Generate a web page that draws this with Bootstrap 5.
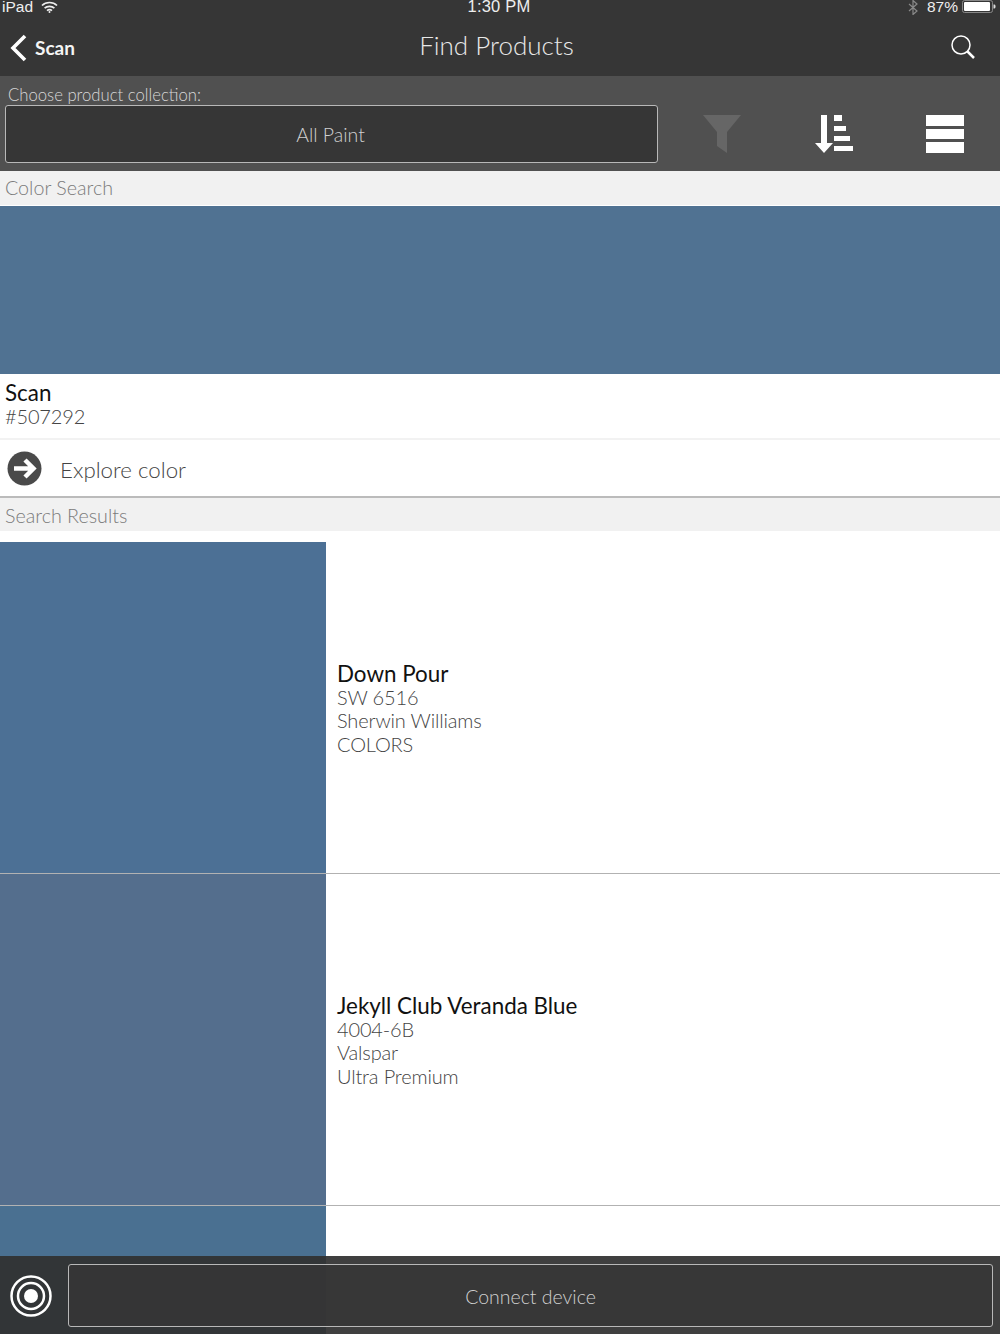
<!DOCTYPE html>
<html lang="en"><head><meta charset="utf-8"><title>Find Products</title>
<link href="https://cdn.jsdelivr.net/npm/bootstrap@5.3.0/dist/css/bootstrap.min.css" rel="stylesheet">
<style>
html,body{margin:0;background:#fff}
.app-screen{position:relative;width:1000px;height:1334px;overflow:hidden;font-family:Lato,sans-serif;font-weight:300;color:#3c3c3c}
.top-dark{height:76px;background:#363636;color:#fff}
.status-row{height:14px;padding:0 4px 0 2px;font:400 15.500px/14px "Liberation Sans",sans-serif;color:#eee}
.status-row>div{flex:1 1 0}
.time{text-align:center;font-size:16.500px;line-height:13px;letter-spacing:.2px}
.nav-row{height:62px;padding:4px 24px 0 10px}
.nav-side{width:200px}
.back-label{font-weight:700;font-size:19px;margin-left:7px;margin-top:3px;color:#f4f4f4}
.back-chev{margin-top:1px}
.page-title{font-size:26px;line-height:1;flex:1;text-align:center;color:#e8e8e8;margin:-4px 0 0 7px}
.tools{height:95px;background:#505050;padding:0 0 0 5px}
.picker-col{width:654px}
.choose{font-size:16.700px;line-height:18px;color:#d8d8d8;padding:10px 0 0 3px;height:29px}
.picker,.connect{background:#363636;border:1.500px solid #b8b8b8;border-radius:3px;display:flex;align-items:center;justify-content:center;color:#d0d0d0;font-size:19.500px;padding-top:2px}
.picker{height:58px;width:653px;padding-right:2px}
.tool-icons{flex:1;padding:20px 36px 0 44px}
.tool-icons svg{display:block}
.sect{background:#f1f1f1;color:#7b7b7b;font-size:19.700px;padding-left:5px}
.sect-a{height:34px;line-height:34px;margin-bottom:1px}
.sect-b{height:33px;line-height:36px;margin-bottom:11px}
.scan-swatch{height:168px;background:#507292}
.scan-info{height:66px;padding:6px 5px 0;border-bottom:2px solid #f2f2f2}
.nm{font-size:22.400px;line-height:25px;color:#111;font-weight:400}
.dt{font-size:20px;line-height:23.500px;color:#444;letter-spacing:-.15px}
.explore{height:58px;padding:3px 7px 0;font-size:22.300px;color:#444;border-bottom:2px solid #bbb}
.explore svg{margin-right:18px;margin-top:-3px}
.result{height:332px;border-bottom:1px solid #b2b2b2;display:flex}
.chip{width:326px;flex:none}
.res-text{padding-left:11px;align-self:center;margin-top:2px}
.bottom{position:absolute;left:0;right:0;bottom:0;height:78px;background:rgba(48,48,48,.93);padding:8px 7px 7px 10px}
.connect{flex:1;height:63px;margin-left:16px;background:rgba(54,54,54,.8)}
</style></head><body>
<div class="app-screen">
 <div class="top-dark">
  <div class="status-row d-flex">
   <div class="d-flex align-items-center gap-2"><span>iPad</span>
    <svg width="17" height="13" viewBox="0 0 17 13" fill="none" stroke="#eee" stroke-width="1.7"><path d="M1 4.500C5 .5 12 .5 16 4.500M3.600 7.200C6.200 4.800 10.800 4.800 13.400 7.200M6 9.600C7.400 8.500 9.600 8.500 11 9.600"/><circle cx="8.500" cy="11" r="1" fill="#eee" stroke="none"/></svg></div>
   <div class="time">1:30 PM</div>
   <div class="d-flex justify-content-end align-items-center">
    <svg width="12" height="15" viewBox="0 0 12 15" fill="none" stroke="#8a8a8a" stroke-width="1.2" class="me-2"><path d="M2 4l8 7-4 3.500V.5l4 3.500-8 7"/></svg>
    <span class="me-1">87%</span>
    <svg width="34" height="14" viewBox="0 0 34 14"><rect x=".5" y=".5" width="30" height="12" rx="2" fill="none" stroke="#888"/><rect x="2" y="2" width="26" height="9" rx="1" fill="#fff"/><path d="M31.500 4.500h1a1 2 0 0 1 0 4h-1z" fill="#ddd"/></svg>
   </div>
  </div>
  <div class="nav-row d-flex align-items-center">
   <div class="nav-side d-flex align-items-center">
    <svg class="back-chev" width="18" height="28" viewBox="0 0 18 28" fill="none" stroke="#fff" stroke-width="3.600"><path d="M15 2L3 14l12 12"/></svg>
    <span class="back-label">Scan</span>
   </div>
   <div class="page-title">Find Products</div>
   <div class="nav-side d-flex justify-content-end">
    <svg width="26" height="26" viewBox="0 0 26 26" fill="none" stroke="#fff"><circle cx="11" cy="11" r="9" stroke-width="1.500"/><path d="M17.500 17.500L24 24" stroke-width="2.500"/></svg>
   </div>
  </div>
 </div>
 <div class="tools d-flex">
  <div class="picker-col">
   <div class="choose">Choose product collection:</div>
   <div class="picker">All Paint</div>
  </div>
  <div class="tool-icons d-flex align-items-center justify-content-between">
   <svg width="38" height="38" viewBox="0 0 38 38" fill="#666"><path d="M0 0h38L24 17v21l-10-7V17z"/></svg>
   <svg width="38" height="38" viewBox="0 0 38 38" fill="#fff"><path d="M6 0h6v28h6L9 38 0 28h6zM19 0h8v6h-8zM19 11h12v5H19zM19 21h16v5H19zM19 31h19v5H19z"/></svg>
   <svg width="38" height="38" viewBox="0 0 38 38" fill="#fff"><path d="M0 0h38v11H0zM0 14h38v10H0zM0 27h38v11H0z"/></svg>
  </div>
 </div>
 <div class="sect sect-a">Color Search</div>
 <div class="scan-swatch"></div>
 <div class="scan-info"><div class="nm">Scan</div><div class="dt">#507292</div></div>
 <div class="explore d-flex align-items-center">
  <svg width="35" height="35" viewBox="0 0 35 35"><circle cx="17.500" cy="17.500" r="17" fill="#4a4a4a"/><path d="M7 17.500h18M18 9l8.500 8.500L18 26" fill="none" stroke="#fff" stroke-width="4.500"/></svg>
  Explore color
 </div>
 <div class="sect sect-b">Search Results</div>
 <div class="result"><div class="chip" style="background:#4c7095"></div><div class="res-text"><div class="nm">Down Pour</div><div class="dt">SW 6516</div><div class="dt">Sherwin Williams</div><div class="dt">COLORS</div></div></div>
 <div class="result"><div class="chip" style="background:#546e8d"></div><div class="res-text"><div class="nm">Jekyll Club Veranda Blue</div><div class="dt">4004-6B</div><div class="dt">Valspar</div><div class="dt">Ultra Premium</div></div></div>
 <div class="result"><div class="chip" style="background:#4a7091"></div><div class="res-text"><div class="nm">Down Pour</div><div class="dt">SW 6516</div></div></div>
 <div class="bottom d-flex align-items-center">
  <svg width="42" height="42" viewBox="0 0 42 42" fill="none" stroke="#fff"><circle cx="21" cy="21" r="19.500" stroke-width="2.500"/><circle cx="21" cy="21" r="13" stroke-width="2.500"/><circle cx="21" cy="21" r="7" fill="#fff" stroke="none"/></svg>
  <div class="connect">Connect device</div>
 </div>
</div>
<script src="https://cdn.jsdelivr.net/npm/bootstrap@5.3.0/dist/js/bootstrap.bundle.min.js"></script>
</body></html>
